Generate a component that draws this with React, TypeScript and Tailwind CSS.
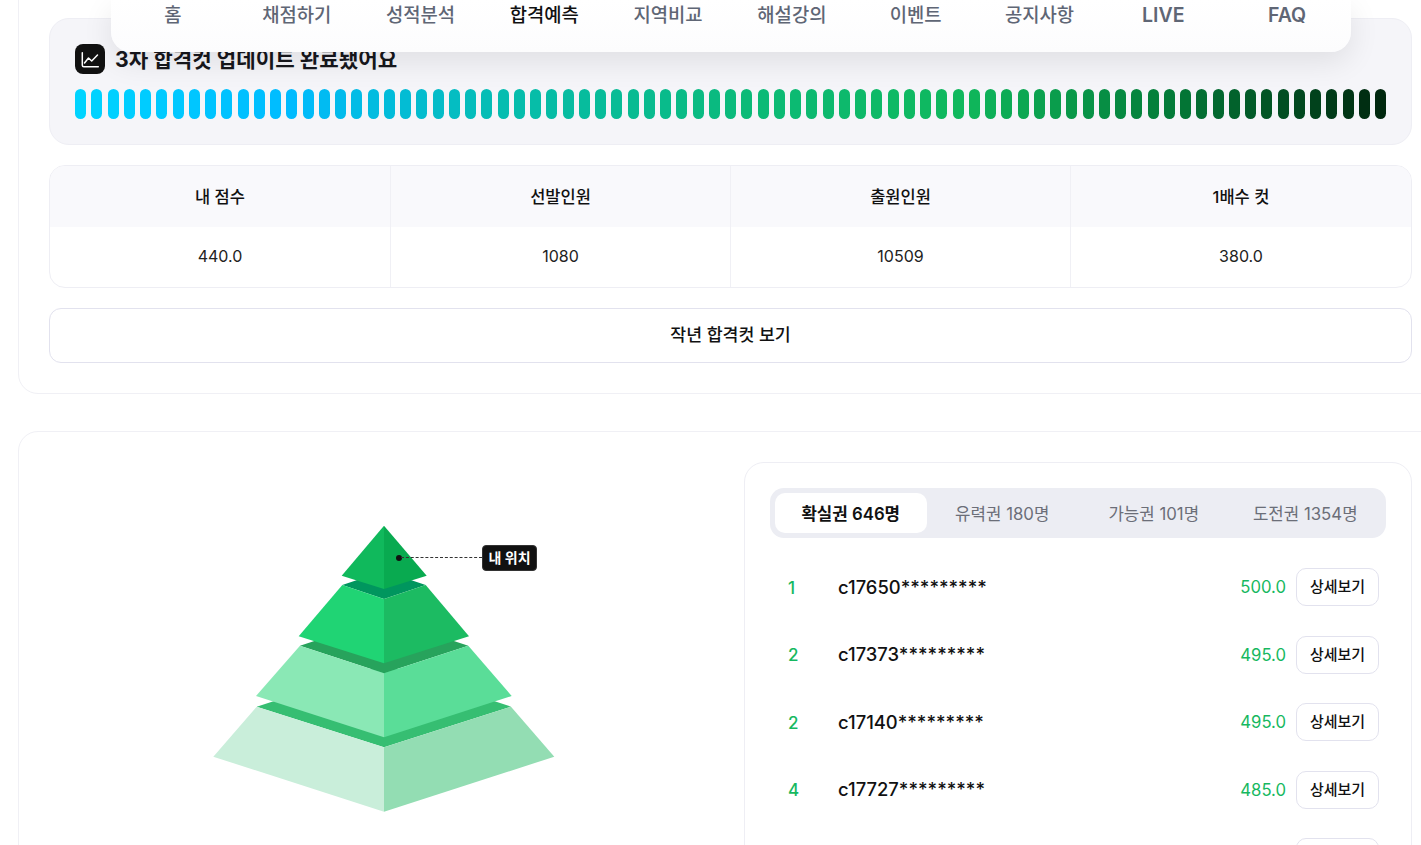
const NAV = ['홈', '채점하기', '성적분석', '합격예측', '지역비교', '해설강의', '이벤트', '공지사항', 'LIVE', 'FAQ'];
const STATS = [
  { label: '내 점수', value: '440.0' },
  { label: '선발인원', value: '1080' },
  { label: '출원인원', value: '10509' },
  { label: '1배수 컷', value: '380.0' },
];
const TABS = ['확실권 646명', '유력권 180명', '가능권 101명', '도전권 1354명'];
const ROWS = [
  { rank: 1, id: 'c17650*********', score: '500.0' },
  { rank: 2, id: 'c17373*********', score: '495.0' },
  { rank: 2, id: 'c17140*********', score: '495.0' },
  { rank: 4, id: 'c17727*********', score: '485.0' },
  { rank: 5, id: 'c17412*********', score: '480.0' },
];

// gradient stops of the progress pills, [position, r, g, b]
const STOPS = [
  [0, 0, 212, 255],
  [0.16, 0, 187, 255],
  [0.324, 5, 189, 176],
  [0.514, 11, 186, 120],
  [0.68, 16, 184, 92],
  [0.84, 3, 122, 56],
  [1, 0, 40, 15],
];

function barColor(t: number) {
  for (let i = 1; i < STOPS.length; i++) {
    if (t <= STOPS[i][0]) {
      const a = STOPS[i - 1];
      const b = STOPS[i];
      const k = (t - a[0]) / (b[0] - a[0]);
      const mix = (n: number) => Math.round(a[n] + (b[n] - a[n]) * k);
      return `rgb(${mix(1)},${mix(2)},${mix(3)})`;
    }
  }
  return 'rgb(0,40,15)';
}

function Pyramid() {
  return (
    <svg width="342" height="287" viewBox="213 525 342 287" className="block">
      <polygon points="256.7,706.7 384,665 511,706.7 384,747.3" fill="#36BE72" />
      <polygon points="256.7,706.7 384,747.3 384,811.7 213.3,756.7" fill="#C9EEDA" />
      <polygon points="511,706.7 384,747.3 384,811.7 554.3,756.7" fill="#93DDB3" />
      <polygon points="300,645.7 384,618 468.3,645.7 384,673.3" fill="#27A35C" />
      <polygon points="300,645.7 384,673.3 384,737.3 256,696" fill="#8AE8B5" />
      <polygon points="468.3,645.7 384,673.3 384,737.3 511.7,696" fill="#5ADD98" />
      <polygon points="342.3,585 384,571 425.7,585 384,599" fill="#00965E" />
      <polygon points="342.3,585 384,599 384,663.3 298.7,636.3" fill="#20D474" />
      <polygon points="425.7,585 384,599 384,663.3 469,636.3" fill="#1CBB62" />
      <polygon points="384,525.7 341.7,575.7 384,589" fill="#10B95C" />
      <polygon points="384,525.7 426.7,575.7 384,589" fill="#09AA50" />
    </svg>
  );
}

export default function App() {
  return (
    <div className="relative h-[845px] overflow-hidden bg-white font-[Inter,'Noto_Sans_CJK_KR',sans-serif] text-[#111]">
      {/* Floating nav */}
      <div className="absolute left-[111px] top-0 z-10 h-[52px] w-[1240px] rounded-b-[20px] bg-gradient-to-b from-white to-[#fcfcfd] pr-[2px] shadow-[0_10px_30px_rgba(0,0,0,0.09)]">
        <div className="grid grid-cols-10">
          {NAV.map((n) => (
            <span
              key={n}
              className={
                n === '합격예측'
                  ? 'text-center text-[18.8px] font-medium leading-[32px] text-[#111]'
                  : n === 'LIVE' || n === 'FAQ'
                    ? 'text-center text-[19.5px] font-semibold leading-[31px] text-[#5f6675]'
                    : 'text-center text-[18.8px] font-medium leading-[32px] text-[#5f6675]'
              }
            >
              {n}
            </span>
          ))}
        </div>
      </div>

      <div className="ml-[18px] mt-[-20px] flex w-[1425px] flex-col gap-[37px]">
        {/* Cut-off card */}
        <section className="flex flex-col gap-5 rounded-[20px] border border-[#f0f0f5] px-[30px] pb-[30px] pt-[37px]">
          <div className="flex flex-col gap-[15px] rounded-[20px] border border-[#eeeef4] bg-[#f5f5f9] p-[25px]">
            <div className="flex items-center gap-[10px]">
              <div className="flex h-[30px] w-[30px] items-center justify-center rounded-lg bg-[#111]">
                <svg width="30" height="30" viewBox="0 0 30 30" fill="none" stroke="#fff" strokeWidth="1.5" strokeLinecap="round" strokeLinejoin="round">
                  <path d="M7.3 8.7v12.5a1.5 1.5 0 0 0 1.5 1.5h14.5" />
                  <path d="M9.5 19l4-5 3.2 3 5.8-6" />
                </svg>
              </div>
              <h2 className="text-[21.2px] font-bold leading-[30px] text-[#17171c]">3차 합격컷 업데이트 완료됐어요</h2>
            </div>
            <div className="flex h-[30px] justify-between">
              {Array.from({ length: 81 }).map((_, i) => (
                <div key={i} className="h-[30px] w-[11px] rounded-full" style={{ backgroundColor: barColor(i / 80) }} />
              ))}
            </div>
          </div>

          <div className="grid grid-cols-[340px_340px_340px_1fr] overflow-hidden rounded-[16px] border border-[#eeeef4]">
            {STATS.map((s, i) => (
              <div key={s.label} className={i === 0 ? 'flex flex-col' : 'flex flex-col border-l border-[#f0f0f5]'}>
                <div className="flex h-[61px] items-center justify-center bg-[#f9f9fc] pt-[2px] text-[16.5px] font-medium">{s.label}</div>
                <div className="flex h-[60px] items-center justify-center pb-[2px] text-[16px] text-[#222]">{s.value}</div>
              </div>
            ))}
          </div>

          <button className="h-[55px] rounded-[12px] border border-[#e2e2ee] bg-white pb-[2px] text-[17.3px] font-medium">
            작년 합격컷 보기
          </button>
        </section>

        {/* Ranking card */}
        <section className="flex gap-[25px] rounded-[20px] border border-[#f0f0f5] px-[30px] pb-[40px] pt-[30px]">
          <div className="relative h-[400px] w-[670px] shrink-0">
            <div className="absolute left-[164px] top-[63px]">
              <Pyramid />
            </div>
            <div className="absolute left-[347px] top-[93px] h-[6px] w-[6px] rounded-full bg-[#111]" />
            <div className="absolute left-[352px] top-[95px] w-[81px] border-t border-dashed border-[#333]" />
            <div className="absolute left-[433px] top-[83px] flex h-[26px] w-[55px] items-center justify-center rounded-[4px] border border-[#333] bg-[#111] pb-[2px] text-[14px] font-semibold text-white">
              내 위치
            </div>
          </div>

          <div className="flex-1 rounded-[20px] border border-[#eeeef4] bg-white p-[25px]">
            <div className="flex h-[50px] rounded-[14px] bg-[#ecedf3] p-[5px]">
              {TABS.map((t, i) => (
                <div
                  key={t}
                  className={
                    i === 0
                      ? 'flex flex-1 items-center justify-center rounded-[10px] bg-white pt-[4px] text-[16.8px] font-semibold text-[#111]'
                      : 'flex flex-1 items-center justify-center pt-[4px] text-[16.8px] text-[#6b6e78]'
                  }
                >
                  {t}
                </div>
              ))}
            </div>
            <div className="mt-[30px] flex flex-col gap-[29.5px] pl-[18px] pr-[7px]">
              {ROWS.map((r) => (
                <div key={r.id} className="flex h-[38px] items-center">
                  <span className="w-[50px] pt-[3px] text-[17px] font-medium text-[#16b860]">{r.rank}</span>
                  <span className="flex-1 pt-[1px] text-[18.4px] font-medium text-[#111]">{r.id}</span>
                  <span className="pt-[2px] text-[16.7px] text-[#16b860]">{r.score}</span>
                  <button className="ml-[10px] h-[38px] w-[83px] rounded-[10px] border border-[#e2e2ee] bg-white pt-[1px] text-[15px] font-medium">
                    상세보기
                  </button>
                </div>
              ))}
            </div>
          </div>
        </section>
      </div>
    </div>
  );
}
